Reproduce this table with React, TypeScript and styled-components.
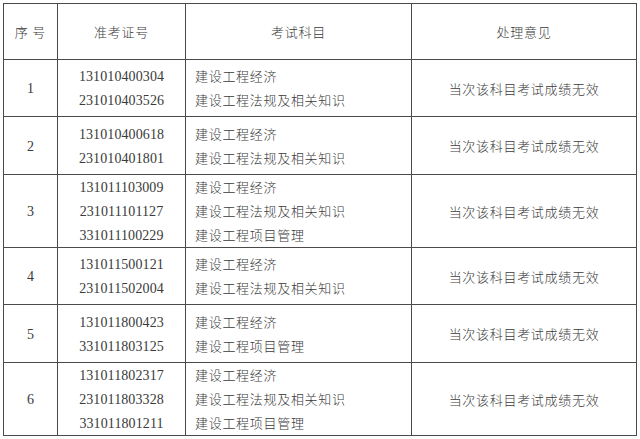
import styled, { createGlobalStyle } from 'styled-components'

const GlobalStyle = createGlobalStyle`
    html, body {
        margin: 0;
        padding: 0;
        background: #ffffff;
    }
`

type Entry = { no: string; ids: string[]; subjects: string[]; height: number }

const ECON = '建设工程经济'
const LAW = '建设工程法规及相关知识'
const PM = '建设工程项目管理'
const RESULT = '当次该科目考试成绩无效'

const rows: Entry[] = [
    { no: '1', ids: ['131010400304', '231010403526'], subjects: [ECON, LAW], height: 57 },
    { no: '2', ids: ['131010400618', '231010401801'], subjects: [ECON, LAW], height: 58 },
    {
        no: '3',
        ids: ['131011103009', '231011101127', '331011100229'],
        subjects: [ECON, LAW, PM],
        height: 73,
    },
    { no: '4', ids: ['131011500121', '231011502004'], subjects: [ECON, LAW], height: 57 },
    { no: '5', ids: ['131011800423', '331011803125'], subjects: [ECON, PM], height: 58 },
    {
        no: '6',
        ids: ['131011802317', '231011803328', '331011801211'],
        subjects: [ECON, LAW, PM],
        height: 72,
    },
]

const App = () => {
    return (
        <>
            <GlobalStyle />
            <Page>
                <Table>
                    <colgroup>
                        <col style={{ width: 54 }} />
                        <col style={{ width: 128 }} />
                        <col style={{ width: 226 }} />
                        <col style={{ width: 225 }} />
                    </colgroup>
                    <thead>
                        <Row $height={56}>
                            <HeadCell>序 号</HeadCell>
                            <HeadCell>准考证号</HeadCell>
                            <HeadCell>考试科目</HeadCell>
                            <HeadCell>处理意见</HeadCell>
                        </Row>
                    </thead>
                    <tbody>
                        {rows.map(r => (
                            <Row key={r.no} $height={r.height}>
                                <Cell $align='center'>
                                    <Digits>{r.no}</Digits>
                                </Cell>
                                <Cell $align='center'>
                                    {r.ids.map(id => (
                                        <Line key={id}>
                                            <Digits>{id}</Digits>
                                        </Line>
                                    ))}
                                </Cell>
                                <Cell $align='left'>
                                    {r.subjects.map(s => (
                                        <Line key={s}>
                                            <Han>{s}</Han>
                                        </Line>
                                    ))}
                                </Cell>
                                <Cell $align='center'>
                                    <Han>{RESULT}</Han>
                                </Cell>
                            </Row>
                        ))}
                    </tbody>
                </Table>
            </Page>
        </>
    )
}

export default App

const Page = styled.div`
    padding: 3px 0 0 3px;
    width: 640px;
    height: 439px;
    box-sizing: border-box;
    background: #ffffff;
`

const Table = styled.table`
    border-collapse: collapse;
    table-layout: fixed;
    width: 634px;
    color: #3a3a3a;
`

const Row = styled.tr<{ $height: number }>`
    height: ${props => props.$height}px;
`

const HeadCell = styled.th`
    border: 1px solid #4a4a4a;
    padding: 0;
    font-family: 'Noto Sans CJK SC', sans-serif;
    font-weight: 300;
    font-size: 13px;
    letter-spacing: 0.8px;
    text-align: center;
    vertical-align: middle;
    color: #3a3a3a;
`

const Cell = styled.td<{ $align: 'left' | 'center' }>`
    border: 1px solid #4a4a4a;
    padding: 0 0 0 ${props => (props.$align === 'left' ? '9px' : '0')};
    text-align: ${props => props.$align};
    vertical-align: middle;
`

const Line = styled.div`
    height: 24px;
    line-height: 24px;
`

const Digits = styled.span`
    font-family: 'Liberation Serif', serif;
    font-size: 14px;
    letter-spacing: 0.1px;
`

const Han = styled.span`
    font-family: 'Noto Sans CJK SC', sans-serif;
    font-weight: 300;
    font-size: 13px;
    letter-spacing: 0.7px;
`
